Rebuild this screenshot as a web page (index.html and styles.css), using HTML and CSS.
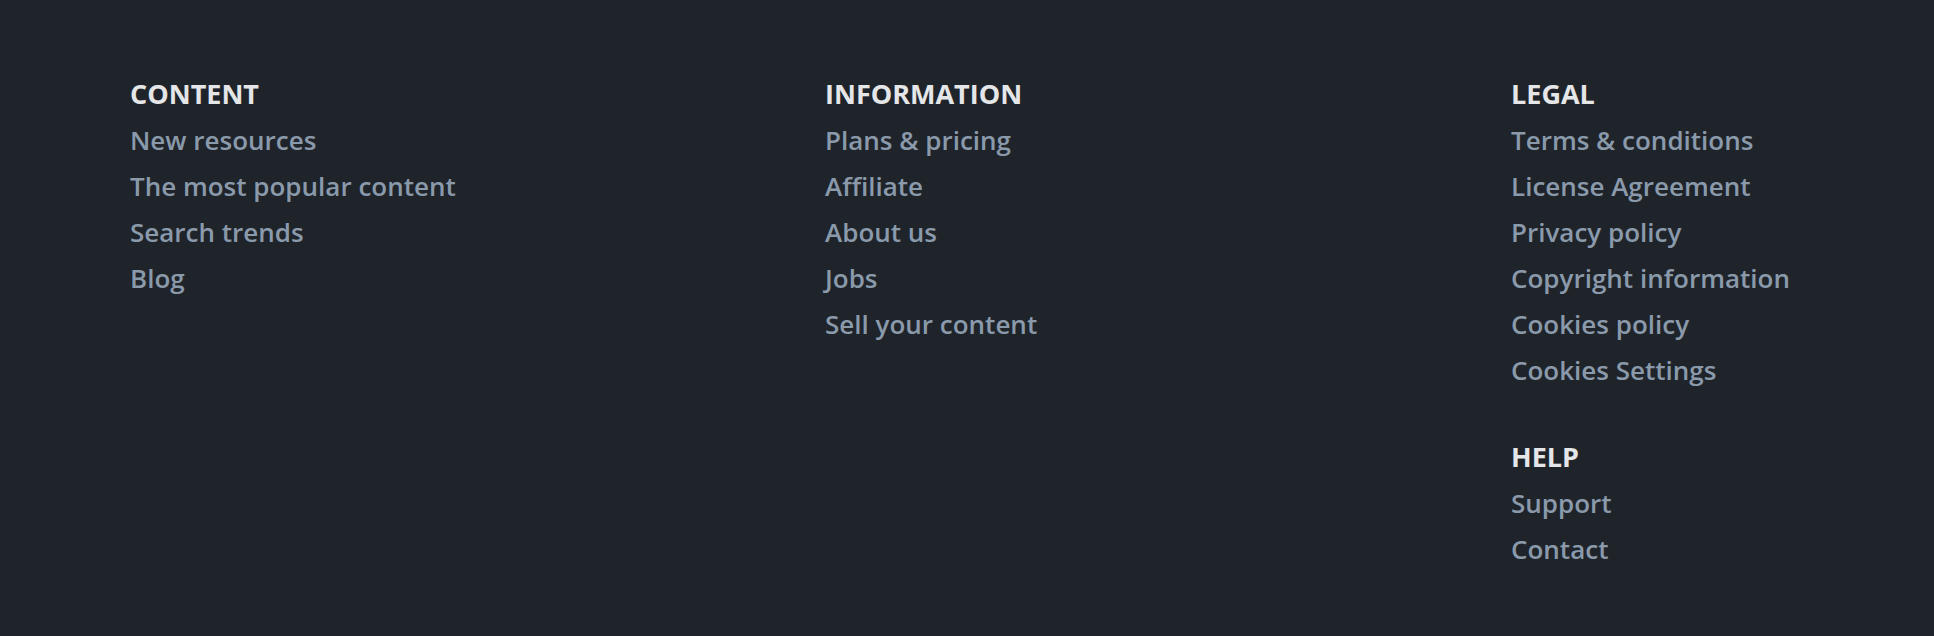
FILE: index.html
```html
<!DOCTYPE html>
<html lang="en">
<head>
<meta charset="utf-8">
<title>Footer</title>
<link rel="stylesheet" href="styles.css">
</head>
<body>
<footer class="footer">
  <div class="footer-grid">
    <div class="col">
      <section class="group">
        <h3 class="group-title">CONTENT</h3>
        <ul class="links">
          <li><a href="#">New resources</a></li>
          <li><a href="#">The most popular content</a></li>
          <li><a href="#">Search trends</a></li>
          <li><a href="#">Blog</a></li>
        </ul>
      </section>
    </div>
    <div class="col">
      <section class="group">
        <h3 class="group-title">INFORMATION</h3>
        <ul class="links">
          <li><a href="#">Plans &amp; pricing</a></li>
          <li><a href="#">Affiliate</a></li>
          <li><a href="#">About us</a></li>
          <li><a href="#">Jobs</a></li>
          <li><a href="#">Sell your content</a></li>
        </ul>
      </section>
    </div>
    <div class="col">
      <section class="group">
        <h3 class="group-title">LEGAL</h3>
        <ul class="links">
          <li><a href="#">Terms &amp; conditions</a></li>
          <li><a href="#">License Agreement</a></li>
          <li><a href="#">Privacy policy</a></li>
          <li><a href="#">Copyright information</a></li>
          <li><a href="#">Cookies policy</a></li>
          <li><a href="#">Cookies Settings</a></li>
        </ul>
      </section>
      <section class="group">
        <h3 class="group-title">HELP</h3>
        <ul class="links">
          <li><a href="#">Support</a></li>
          <li><a href="#">Contact</a></li>
        </ul>
      </section>
    </div>
  </div>
</footer>
</body>
</html>
```
FILE: styles.css
```css
html, body {
  margin: 0;
  padding: 0;
  background: #1f242b;
}
body {
  font-family: "Open Sans", "Liberation Sans", sans-serif;
  min-height: 636px;
}
.footer {
  padding: 71px 0 0 130px;
}
.footer-grid {
  display: grid;
  grid-template-columns: 695px 686px auto;
}
.col {
  display: flex;
  flex-direction: column;
  gap: 41px;
}
.group-title {
  margin: 0;
  font-size: 27px;
  line-height: 46px;
  font-weight: 700;
  color: #e5e6e8;
}
.links {
  list-style: none;
  margin: 0;
  padding: 0;
}
.links li {
  font-size: 26px;
  line-height: 46px;
  font-weight: 600;
}
.links a {
  color: #8a9aab;
  text-decoration: none;
}
```
